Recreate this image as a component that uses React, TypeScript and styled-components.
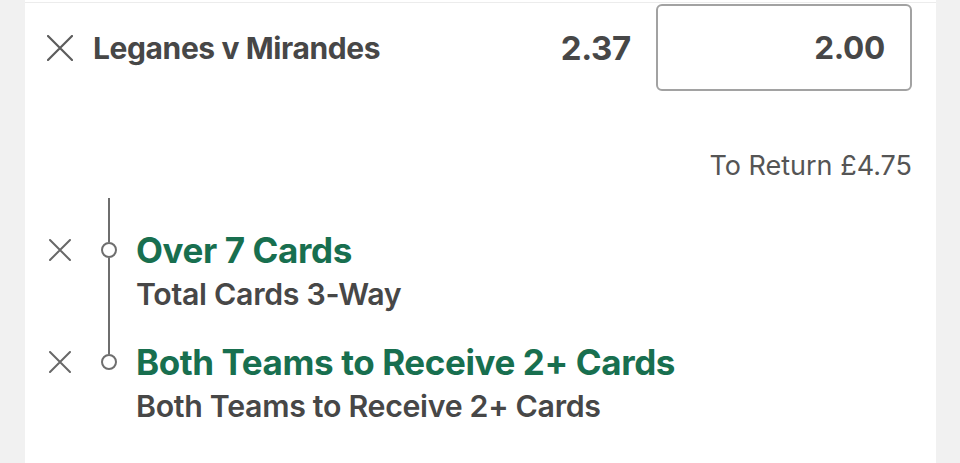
import React from "react";
import styled, { createGlobalStyle } from "styled-components";

const Global = createGlobalStyle`
  html, body { margin: 0; padding: 0; background: #f1f1f1; }
  body { font-family: Inter, "Liberation Sans", Arial, sans-serif; }
`;

const Panel = styled.div`
  margin: 0 24px 0 25px;
  min-height: 463px;
  background: #ffffff;
  padding: 0 24px 0 22px;
  box-sizing: border-box;
  overflow: hidden;
`;

const TopRule = styled.div`
  margin: 2px -24px 0 -22px;
  height: 1px;
  background: #ececec;
`;

const BetRow = styled.div`
  display: flex;
  align-items: center;
  height: 89px;
`;

const CrossCell = styled.div<{ $size: number; $pt?: number }>`
  width: 26px;
  height: ${(p) => (p.$pt !== undefined ? "40px" : `${p.$size}px`)};
  margin-top: ${(p) => p.$pt ?? 0}px;
  display: flex;
  align-items: center;
  justify-content: center;
  flex: none;
`;

const Title = styled.div`
  flex: 1;
  margin-left: 20px;
  font-size: 30px;
  font-weight: 700;
  color: #474747;
  letter-spacing: -0.4px;
`;

const Odds = styled.div`
  font-size: 33px;
  font-weight: 700;
  color: #474747;
  margin-right: 25px;
  letter-spacing: -0.3px;
`;

const StakeBox = styled.div`
  width: 256px;
  height: 87px;
  box-sizing: border-box;
  border: 2px solid #a2a2a2;
  border-radius: 6px;
  display: flex;
  align-items: center;
  justify-content: flex-end;
  padding-right: 25px;
  font-size: 31.5px;
  font-weight: 700;
  color: #474747;
  letter-spacing: -0.3px;
`;

const ReturnRow = styled.div`
  margin-top: 58px;
  line-height: 32px;
  text-align: right;
  font-size: 27px;
  font-weight: 400;
  color: #555555;
`;

const Legs = styled.div`
  margin-top: 16px;
`;

const Leg = styled.div`
  display: flex;
`;

const Marker = styled.div`
  width: 24px;
  margin: 0 15px 0 24px;
  display: flex;
  flex-direction: column;
  align-items: center;
  flex: none;
`;

const Seg = styled.div<{ $h?: number; $hide?: boolean }>`
  width: 2px;
  background: ${(p) => (p.$hide ? "transparent" : "#6e6e6e")};
  ${(p) => (p.$h !== undefined ? `height: ${p.$h}px; flex: none;` : "flex: 1;")}
`;

const Dot = styled.div`
  width: 16px;
  height: 16px;
  box-sizing: border-box;
  border: 2px solid #6e6e6e;
  border-radius: 50%;
  flex: none;
`;

const TextCol = styled.div<{ $pt: number }>`
  padding: ${(p) => p.$pt}px 0 12px;
`;

const Selection = styled.div`
  font-size: 35px;
  line-height: 40px;
  font-weight: 700;
  color: #186f4f;
  letter-spacing: -0.4px;
`;

const Market = styled.div`
  margin-top: 6px;
  font-size: 30.3px;
  line-height: 36px;
  font-weight: 600;
  color: #474747;
  letter-spacing: -0.3px;
`;

const Cross = ({ size, stroke, color }: { size: number; stroke: number; color: string }) => (
  <svg width={size} height={size} viewBox={`0 0 ${size} ${size}`}>
    <path
      d={`M1 1 L${size - 1} ${size - 1} M${size - 1} 1 L1 ${size - 1}`}
      stroke={color}
      strokeWidth={stroke}
      strokeLinecap="round"
      fill="none"
    />
  </svg>
);

const legs = [
  { sel: "Over 7 Cards", market: "Total Cards 3-Way" },
  { sel: "Both Teams to Receive 2+ Cards", market: "Both Teams to Receive 2+ Cards" },
];

export default function App() {
  return (
    <>
      <Global />
      <Panel>
        <TopRule />
        <BetRow>
          <CrossCell $size={26}>
            <Cross size={26} stroke={2.2} color="#5c5c5c" />
          </CrossCell>
          <Title>Leganes v Mirandes</Title>
          <Odds>2.37</Odds>
          <StakeBox>2.00</StakeBox>
        </BetRow>
        <ReturnRow>To Return £4.75</ReturnRow>
        <Legs>
          {legs.map((l, i) => {
            const pt = i === 0 ? 32 : 18;
            const last = i === legs.length - 1;
            return (
              <Leg key={i}>
                <CrossCell $size={22} $pt={pt}>
                  <Cross size={22} stroke={2} color="#686868" />
                </CrossCell>
                <Marker>
                  <Seg $h={pt + 12} />
                  <Dot />
                  <Seg $hide={last} />
                </Marker>
                <TextCol $pt={pt}>
                  <Selection>{l.sel}</Selection>
                  <Market>{l.market}</Market>
                </TextCol>
              </Leg>
            );
          })}
        </Legs>
      </Panel>
    </>
  );
}
